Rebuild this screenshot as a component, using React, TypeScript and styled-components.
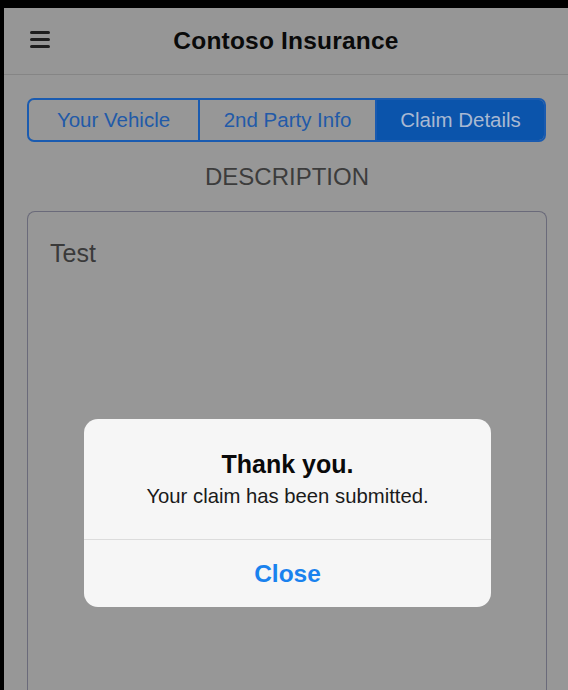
import { createGlobalStyle } from "styled-components";
import styled from "styled-components";

const GlobalStyle = createGlobalStyle`
  html, body {
    margin: 0;
    padding: 0;
    background: #000;
    font-family: "Liberation Sans", Arial, sans-serif;
  }
  * { box-sizing: border-box; }
`;

const Frame = styled.div`
  width: 568px;
  height: 690px;
  padding: 8px 0 0 4px;
  background: #000;
  overflow: hidden;
`;

const Screen = styled.div`
  position: relative;
  height: 100%;
  background: #979797;
  display: flex;
  flex-direction: column;
`;

const Header = styled.header`
  position: relative;
  height: 67px;
  flex-shrink: 0;
  display: flex;
  align-items: center;
  justify-content: center;
  background: #969696;
  border-bottom: 1px solid #858585;
`;

const MenuButton = styled.div`
  position: absolute;
  left: 26px;
  top: 23px;
  width: 20px;
  display: flex;
  flex-direction: column;
  gap: 4px;
  span {
    display: block;
    height: 3px;
    border-radius: 2px;
    background: #1e1e1e;
  }
`;

const Title = styled.h1`
  margin: 0;
  font-size: 24.5px;
  font-weight: 700;
  color: #0a0a0a;
  letter-spacing: 0.2px;
`;

const Body = styled.main`
  flex: 1;
  display: flex;
  flex-direction: column;
  padding: 23px 21px 0 23px;
  min-height: 0;
`;

const Segments = styled.div`
  display: grid;
  grid-template-columns: 169px 177px 1fr;
  height: 44px;
  border: 2px solid #1a5bb0;
  border-radius: 7px;
  overflow: hidden;
  margin-right: 1px;
`;

const Segment = styled.div<{ $active?: boolean }>`
  display: flex;
  align-items: center;
  justify-content: center;
  font-size: 20.5px;
  color: ${(p) => (p.$active ? "#a9b9d2" : "#225aa8")};
  background: ${(p) => (p.$active ? "#0b54ab" : "transparent")};
  & + & {
    border-left: 2px solid #1a5bb0;
  }
`;

const SectionLabel = styled.div`
  text-align: center;
  font-size: 24px;
  color: #3c3c3c;
  margin: 21px 0 0;
  line-height: 28px;
`;

const Description = styled.div`
  flex: 1;
  margin-top: 20px;
  border: 1.5px solid #6a6a7a;
  border-bottom: none;
  border-radius: 8px 8px 0 0;
  padding: 27px 22px;
  font-size: 25px;
  color: #3a3a3a;
`;

const Backdrop = styled.div`
  position: absolute;
  inset: 0;
  display: flex;
  justify-content: center;
  align-items: flex-start;
  padding-top: 411px;
`;

const Alert = styled.div`
  width: 407px;
  margin-left: 3px;
  background: #f6f6f6;
  border-radius: 14px;
  overflow: hidden;
  text-align: center;
`;

const AlertBody = styled.div`
  padding: 31px 20px 0;
  height: 121px;
  border-bottom: 1px solid #dcdcdc;
`;

const AlertTitle = styled.div`
  font-size: 25px;
  font-weight: 700;
  color: #0a0a0a;
  line-height: 28px;
`;

const AlertMessage = styled.div`
  font-size: 20.3px;
  color: #1a1a1a;
  margin-top: 6px;
  line-height: 24px;
`;

const AlertAction = styled.div`
  height: 67px;
  display: flex;
  align-items: center;
  justify-content: center;
  font-size: 24.5px;
  font-weight: 700;
  color: #1a82ee;
`;

export default function App() {
  return (
    <>
      <GlobalStyle />
      <Frame>
        <Screen>
          <Header>
            <MenuButton>
              <span />
              <span />
              <span />
            </MenuButton>
            <Title>Contoso Insurance</Title>
          </Header>
          <Body>
            <Segments>
              <Segment>Your Vehicle</Segment>
              <Segment>2nd Party Info</Segment>
              <Segment $active>Claim Details</Segment>
            </Segments>
            <SectionLabel>DESCRIPTION</SectionLabel>
            <Description>Test</Description>
          </Body>
          <Backdrop>
            <Alert>
              <AlertBody>
                <AlertTitle>Thank you.</AlertTitle>
                <AlertMessage>Your claim has been submitted.</AlertMessage>
              </AlertBody>
              <AlertAction>Close</AlertAction>
            </Alert>
          </Backdrop>
        </Screen>
      </Frame>
    </>
  );
}
